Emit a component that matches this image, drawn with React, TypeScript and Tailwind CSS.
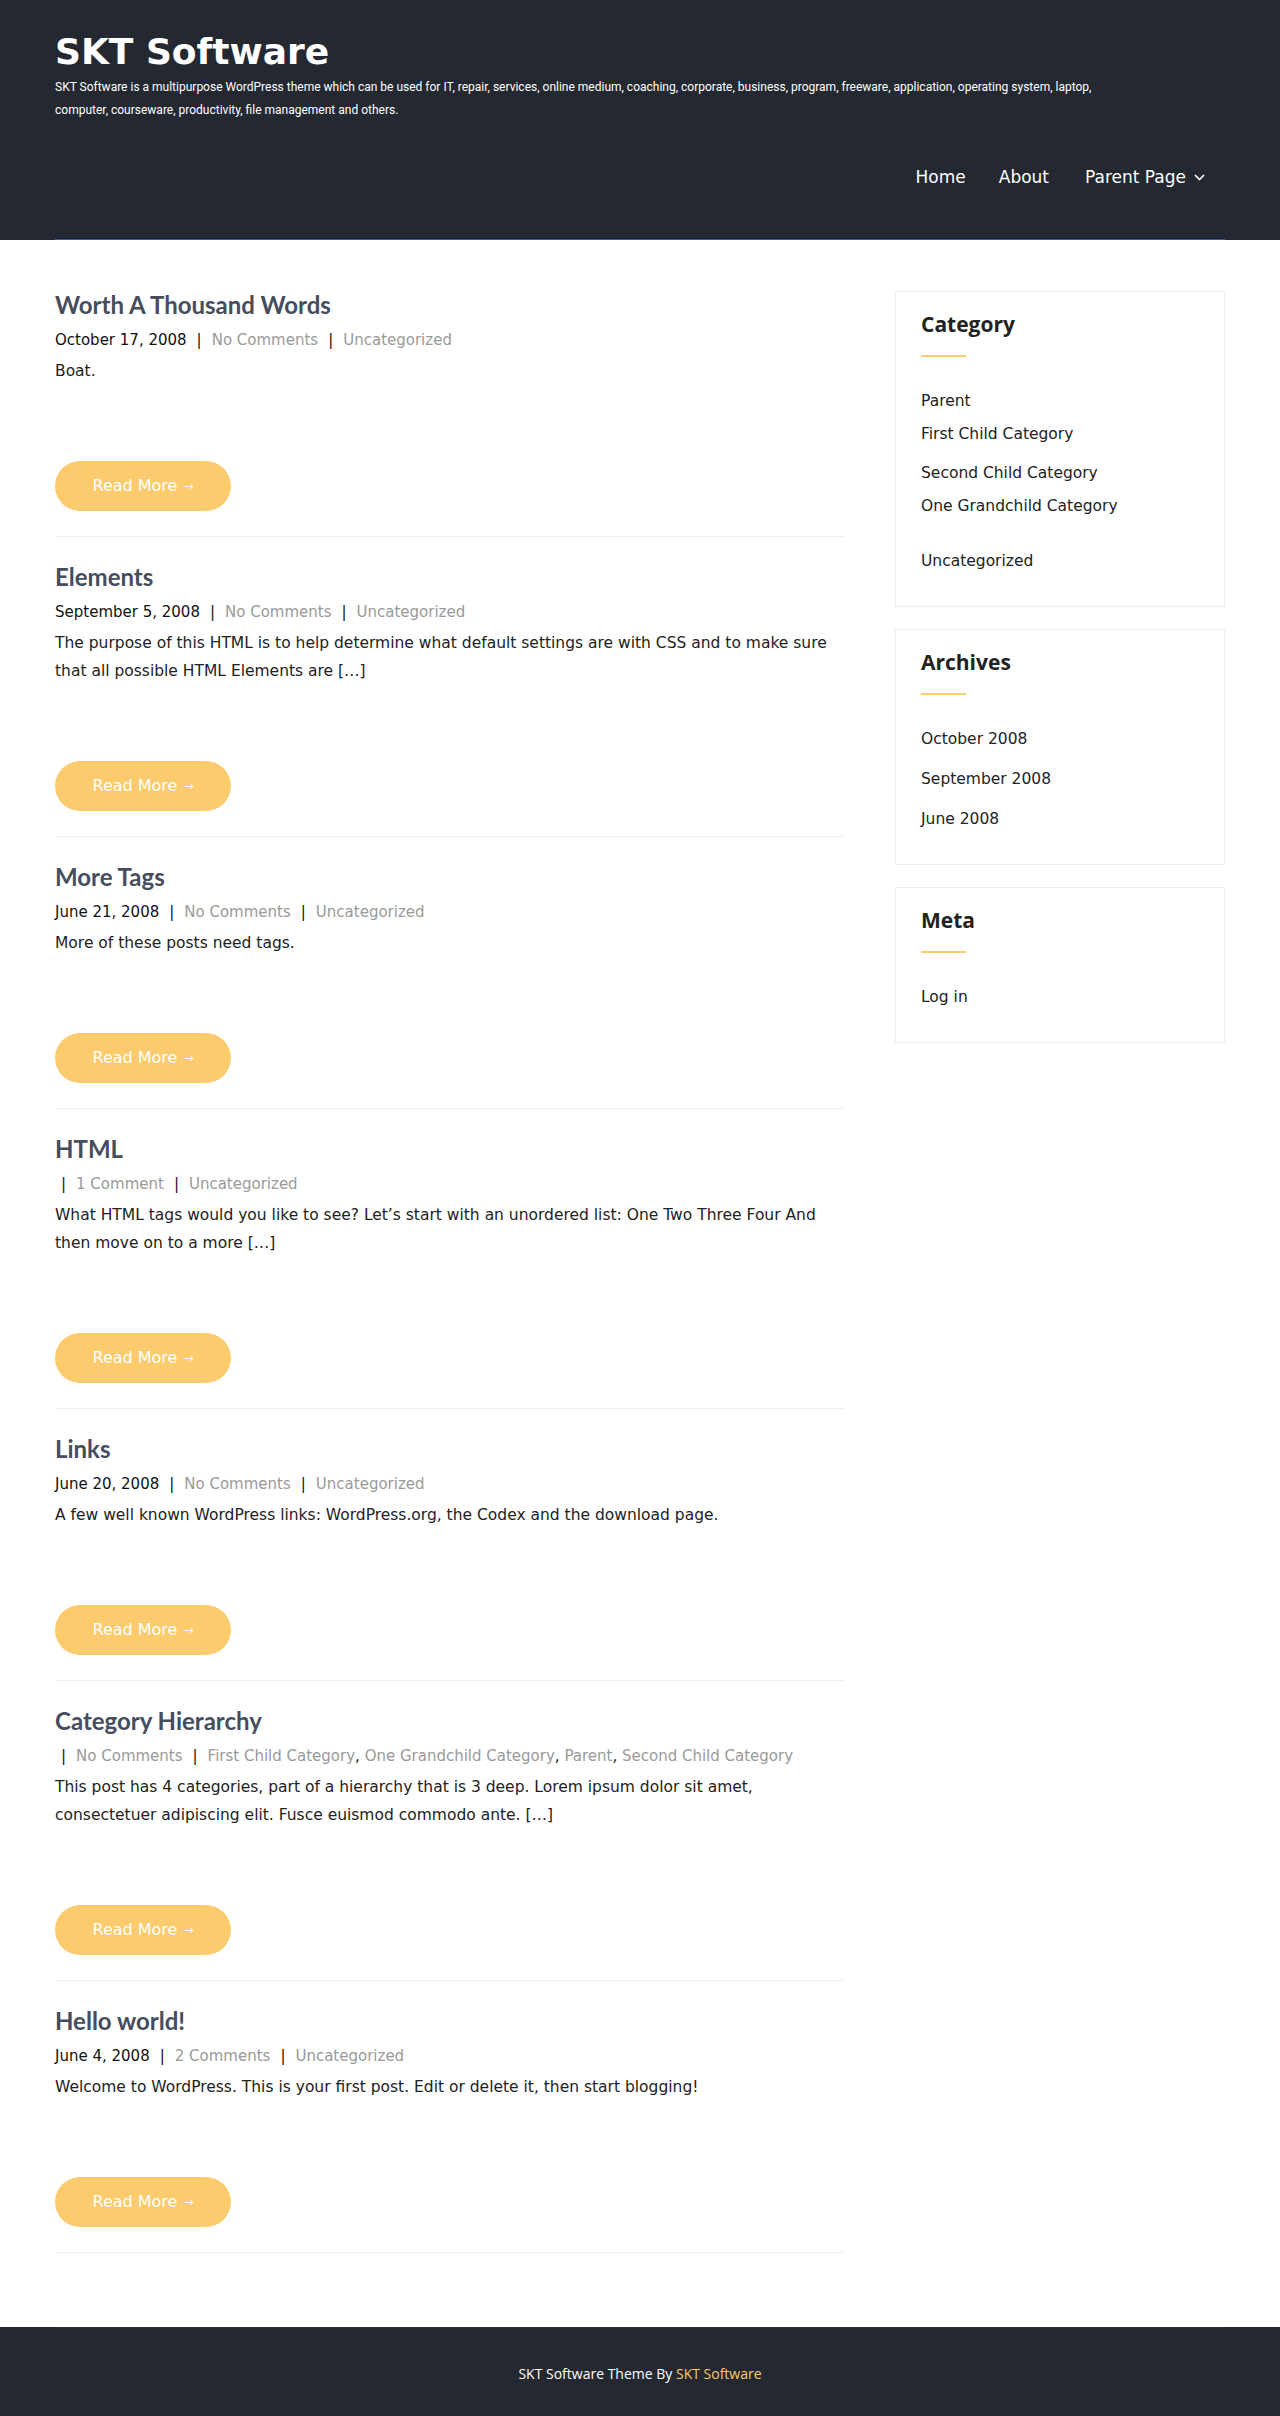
import React from 'react';

type Post = {
  title: string;
  date?: string;
  comments: string;
  cats: string[];
  body: string[];
};

const posts: Post[] = [
  {
    title: 'Worth A Thousand Words',
    date: 'October 17, 2008',
    comments: 'No Comments',
    cats: ['Uncategorized'],
    body: ['Boat.'],
  },
  {
    title: 'Elements',
    date: 'September 5, 2008',
    comments: 'No Comments',
    cats: ['Uncategorized'],
    body: [
      'The purpose of this HTML is to help determine what default settings are with CSS and to make sure',
      'that all possible HTML Elements are […]',
    ],
  },
  {
    title: 'More Tags',
    date: 'June 21, 2008',
    comments: 'No Comments',
    cats: ['Uncategorized'],
    body: ['More of these posts need tags.'],
  },
  {
    title: 'HTML',
    comments: '1 Comment',
    cats: ['Uncategorized'],
    body: [
      'What HTML tags would you like to see? Let’s start with an unordered list: One Two Three Four And',
      'then move on to a more […]',
    ],
  },
  {
    title: 'Links',
    date: 'June 20, 2008',
    comments: 'No Comments',
    cats: ['Uncategorized'],
    body: ['A few well known WordPress links: WordPress.org, the Codex and the download page.'],
  },
  {
    title: 'Category Hierarchy',
    comments: 'No Comments',
    cats: ['First Child Category', 'One Grandchild Category', 'Parent', 'Second Child Category'],
    body: [
      'This post has 4 categories, part of a hierarchy that is 3 deep. Lorem ipsum dolor sit amet,',
      'consectetuer adipiscing elit. Fusce euismod commodo ante. […]',
    ],
  },
  {
    title: 'Hello world!',
    date: 'June 4, 2008',
    comments: '2 Comments',
    cats: ['Uncategorized'],
    body: ['Welcome to WordPress. This is your first post. Edit or delete it, then start blogging!'],
  },
];

function PostItem({ post }: { post: Post }) {
  return (
    <article className="border-b border-[#f0f0f0] mb-[25px] pb-[25px]">
      <h2 className="font-['Lato',sans-serif] font-bold text-[24px] leading-[30px] text-[#454d5e]">
        {post.title}
      </h2>
      <div className="mt-[8px] text-[15px] leading-[24px] whitespace-nowrap text-[#111]">
        {post.date && <span>{post.date}</span>}
        <span className={post.date ? 'mx-[10px]' : 'ml-[6px] mr-[10px]'}>|</span>
        <a className="text-[#9a9a9a]">{post.comments}</a>
        <span className="mx-[10px]">|</span>
        {post.cats.map((c, i) => (
          <React.Fragment key={c}>
            {i > 0 && <span>, </span>}
            <a className="text-[#9a9a9a]">{c}</a>
          </React.Fragment>
        ))}
      </div>
      <p className="mt-[5px] text-[15.5px] leading-[28px] text-[#222]">
        {post.body.map((line, i) => (
          <React.Fragment key={i}>
            {i > 0 && <br />}
            {line}
          </React.Fragment>
        ))}
      </p>
      <a className="mt-[76px] flex h-[50px] w-[176px] items-center justify-center rounded-full bg-[#fbcb6d] text-[16px] text-white">
        Read More <span className="ml-[6px] text-[12px]">→</span>
      </a>
    </article>
  );
}

function Widget({
  title,
  items,
  gaps,
}: {
  title: string;
  items: string[];
  gaps?: string[];
}) {
  return (
    <section className="border border-[#ececec] px-[25px] pt-[18px] pb-[33px]">
      <h3 className="font-['Open_Sans',sans-serif] font-bold text-[21px] leading-[28px] text-[#222]">
        {title}
      </h3>
      <div className="mt-[17px] h-[2px] w-[45px] bg-[#fbcb6d]" />
      <ul className="mt-[32px] text-[15.5px] leading-[24px] text-[#222]">
        {items.map((it, i) => (
          <li key={it} className={i === 0 ? '' : gaps ? gaps[i - 1] : 'mt-[16px]'}>
            {it}
          </li>
        ))}
      </ul>
    </section>
  );
}

export default function App() {
  return (
    <div className="bg-white font-['DejaVu_Sans',sans-serif]">
      <header className="bg-[#232831]">
        <div className="mx-auto h-[240px] w-[1170px] border-b border-[#4054b2]">
          <h1 className="pt-[30px] text-[36px] font-bold leading-[44px] text-white">SKT Software</h1>
          <p className="mt-[2px] font-['Roboto',sans-serif] text-[12px] leading-[23px] text-white">
            SKT Software is a multipurpose WordPress theme which can be used for IT, repair, services, online medium,
            coaching, corporate, business, program, freeware, application, operating system, laptop,
            <br />
            computer, courseware, productivity, file management and others.
          </p>
          <nav className="mt-[43px] flex justify-end pr-[20px] text-[17px] leading-[24px] text-white">
            <a>Home</a>
            <a className="ml-[33px]">About</a>
            <a className="ml-[36px] flex items-center">
              Parent Page
              <svg className="ml-[8px]" width="11" height="7" viewBox="0 0 11 7" fill="none">
                <polyline points="1,1 5.5,5.5 10,1" stroke="white" strokeWidth="1.6" />
              </svg>
            </a>
          </nav>
        </div>
      </header>

      <main className="mx-auto flex w-[1170px] justify-between pt-[50px] pb-[49px]">
        <div className="w-[790px]">
          {posts.map((p) => (
            <PostItem key={p.title} post={p} />
          ))}
        </div>
        <aside className="mt-[1px] flex w-[330px] flex-col gap-[22px] self-start">
          <Widget
            title="Category"
            items={['Parent', 'First Child Category', 'Second Child Category', 'One Grandchild Category', 'Uncategorized']}
            gaps={['mt-[9px]', 'mt-[15px]', 'mt-[9px]', 'mt-[31px]']}
          />
          <Widget title="Archives" items={['October 2008', 'September 2008', 'June 2008']} />
          <Widget title="Meta" items={['Log in']} />
        </aside>
      </main>

      <footer className="bg-[#232831]">
        <div className="mx-auto w-[1170px] border-t border-[#2b303a] py-[36px] text-center font-['Open_Sans',sans-serif] text-[14px] leading-[20px] text-white">
          SKT Software Theme By <a className="text-[#fbcb6d]">SKT Software</a>
        </div>
      </footer>
    </div>
  );
}
